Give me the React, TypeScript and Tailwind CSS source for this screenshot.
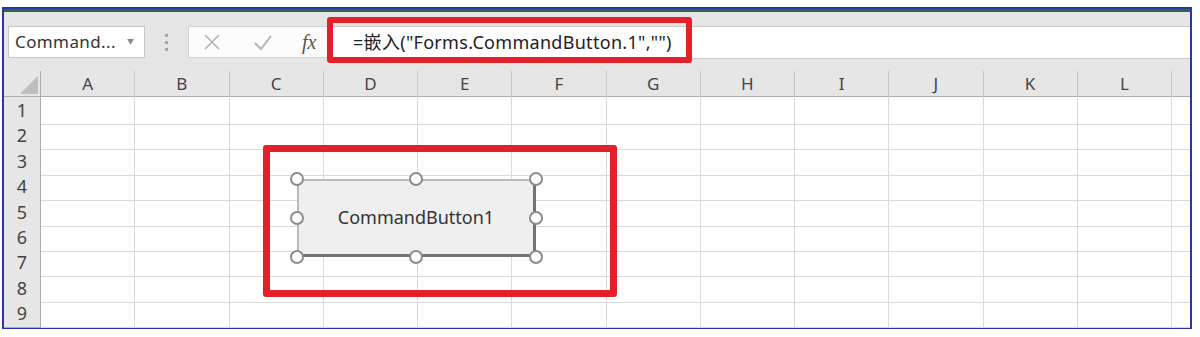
import React from "react";

const cols = ["A", "B", "C", "D", "E", "F", "G", "H", "I", "J", "K", "L"];
const rows = [1, 2, 3, 4, 5, 6, 7, 8, 9];
const font = { fontFamily: '"Noto Sans", "Noto Sans CJK SC", sans-serif' };

function Handle({ x, y }: { x: number; y: number }) {
  return (
    <div
      className="absolute w-[14px] h-[14px] rounded-full border-2 border-[#8c8c8c] bg-white"
      style={{ left: x - 7, top: y - 7 }}
    />
  );
}

export default function App() {
  const handles = [
    [297, 179], [416, 179], [536, 179],
    [297, 218], [536, 218],
    [297, 257], [416, 257], [536, 257],
  ];
  return (
    <div className="relative w-[1200px] h-[337px] bg-white overflow-hidden" style={font}>
      <div className="ml-[2px] mt-[7px] w-[1190px] h-[322px] border-2 border-[#3232a8] flex flex-col">
        <div className="h-[3px] bg-[#1f6e46] shrink-0" />
        {/* toolbar */}
        <div className="h-[59px] shrink-0 bg-[#e6e6e6] flex items-start pt-[14px] pl-[4px]">
          <div className="w-[137px] h-[32px] bg-white border border-[#c6c6c6] flex items-center pl-[6px] pr-[10px] justify-between">
            <span className="text-[17px] text-[#333] tracking-[0.4px]">Command...</span>
            <span className="text-[7px] text-[#888] mt-[1px]">▼</span>
          </div>
          <div className="w-[43px] h-[32px] flex flex-col items-center justify-center gap-[4px]">
            <div className="w-[3px] h-[3px] bg-[#a8a8a8]" />
            <div className="w-[3px] h-[3px] bg-[#a8a8a8]" />
            <div className="w-[3px] h-[3px] bg-[#a8a8a8]" />
          </div>
          <div className="w-[140px] h-[32px] bg-[#fcfcfc] border border-[#d2d2d2] flex items-center">
            <svg width="20" height="20" viewBox="0 0 20 20" className="ml-[13px]">
              <path d="M3 3 L17 17 M17 3 L3 17" stroke="#b4b4b4" strokeWidth="1.6" fill="none" />
            </svg>
            <svg width="22" height="20" viewBox="0 0 22 20" className="ml-[30px]">
              <path d="M3 11 L9 17 L19 4" stroke="#b4b4b4" strokeWidth="2" fill="none" />
            </svg>
            <span
              className="ml-[28px] text-[20px] italic text-[#555]"
              style={{ fontFamily: '"Liberation Serif", serif' }}
            >
              fx
            </span>
          </div>
          <div className="flex-1 h-[33px] bg-white border-y border-[#c8c8c8] flex items-center pl-[25px]">
            <span className="text-[18px] text-[#222] tracking-[0.3px]">=嵌入("Forms.CommandButton.1","")</span>
          </div>
        </div>
        {/* header row */}
        <div className="grid grid-cols-[37px_repeat(12,94.25px)_1fr] h-[26px] shrink-0 bg-[#e6e6e6] border-b border-[#ababab]">
          <div className="border-r border-[#ababab] relative">
            <svg width="20" height="20" viewBox="0 0 20 20" className="absolute left-[15px] top-[4px]">
              <polygon points="1,19 19,19 19,1" fill="#bdbdbd" />
            </svg>
          </div>
          {cols.map((c) => (
            <div key={c} className="border-r border-[#c8c8c8] flex items-center justify-center text-[17px] text-[#444]">
              {c}
            </div>
          ))}
          <div />
        </div>
        {rows.map((r) => (
          <div key={r} className="grid grid-cols-[37px_repeat(12,94.25px)_1fr] h-[25.4px] shrink-0">
            <div className="bg-[#e6e6e6] border-r border-b border-[#ababab] flex items-center justify-center text-[18px] text-[#444]">
              {r}
            </div>
            {cols.map((c) => (
              <div key={c} className="border-r border-b border-[#d9d9d9]" />
            ))}
            <div className="border-b border-[#d9d9d9]" />
          </div>
        ))}
      </div>

      {/* red highlight boxes */}
      <div className="absolute left-[327px] top-[17px] w-[365px] h-[46px] border-[6px] border-[#e4202a] rounded-[3px]" />
      <div className="absolute left-[263px] top-[145px] w-[354px] h-[152px] border-[7px] border-[#e4202a] rounded-[3px]" />

      {/* command button */}
      <div className="absolute left-[297px] top-[179px] w-[239px] h-[78px] bg-[#efefef] border-t-2 border-l-2 border-[#b9b9b9] border-r-[3px] border-b-[3px] border-r-[#747474] border-b-[#747474] flex items-center justify-center">
        <span className="text-[18px] text-[#333]">CommandButton1</span>
      </div>
      {handles.map(([x, y], i) => (
        <Handle key={i} x={x} y={y} />
      ))}
    </div>
  );
}
